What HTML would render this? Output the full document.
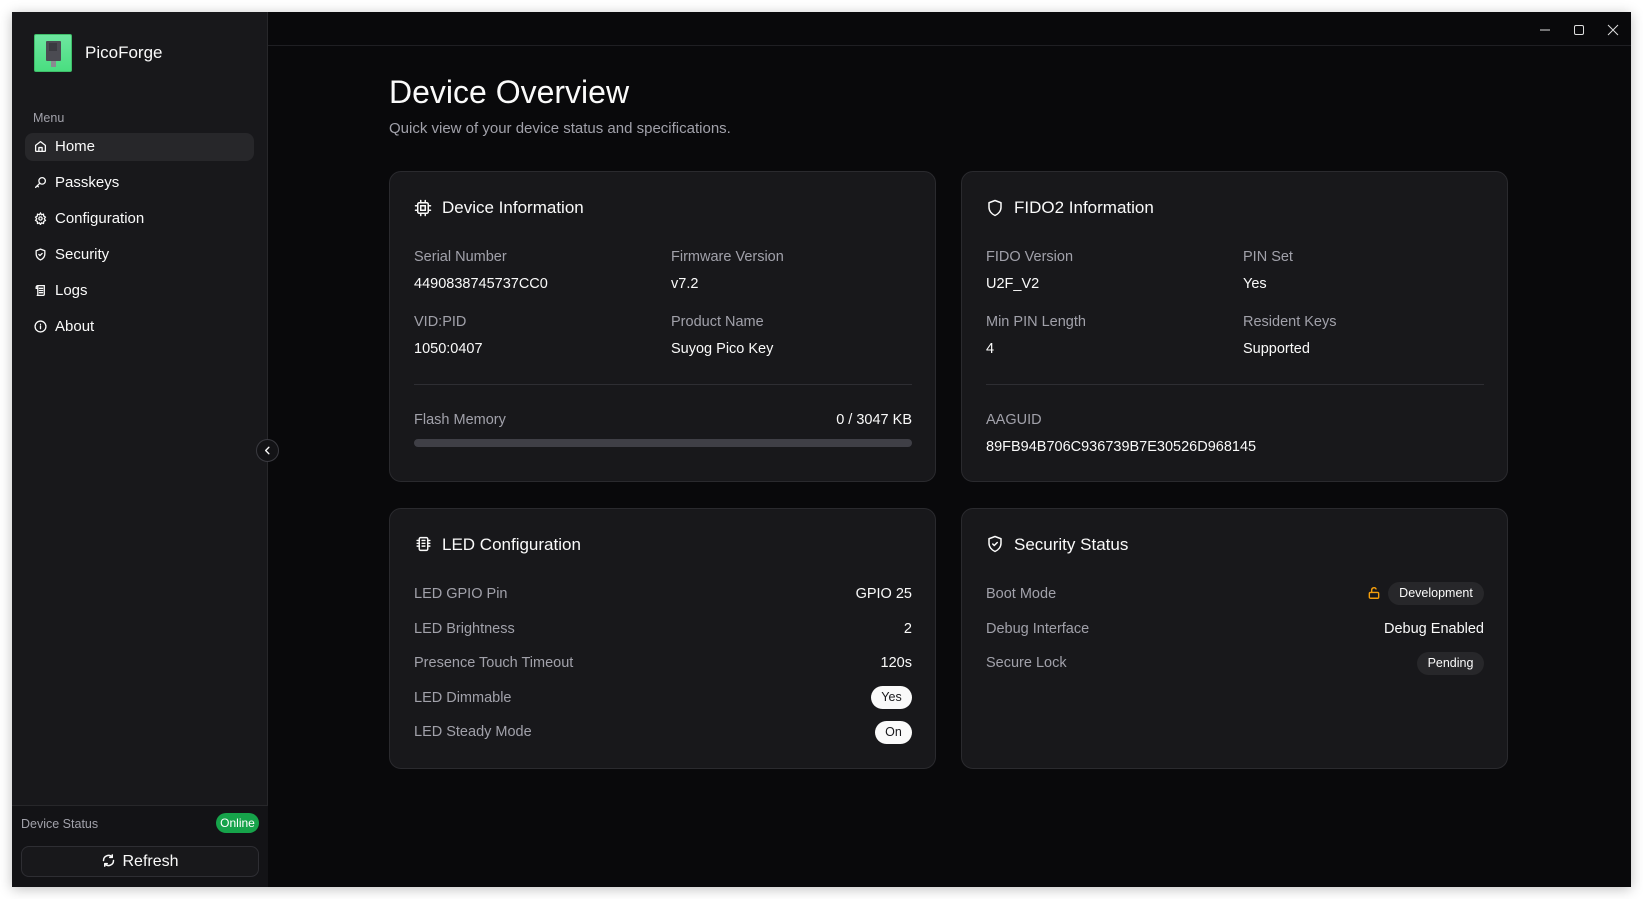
<!DOCTYPE html>
<html><head><meta charset="utf-8">
<style>
*{box-sizing:border-box;margin:0;padding:0}
body{width:1643px;height:899px;background:#fff;font-family:"Liberation Sans",sans-serif;position:relative;overflow:hidden;color:#fafafa}
.win{position:absolute;left:12px;top:12px;width:1619px;height:875px;background:#09090b;box-shadow:0 2px 12px rgba(0,0,0,.25);overflow:hidden}
.side{position:absolute;left:0;top:0;width:256px;height:875px;background:#18181b;border-right:1px solid #27272a}
.a{position:absolute;white-space:nowrap}
.lbl{color:#a1a1aa;font-size:14.5px;margin-top:2px}
.val{color:#fafafa;font-size:14.5px;margin-top:2px}
.card{position:absolute;background:#18181b;border:1px solid #2a2a2e;border-radius:12px}
.ct{font-size:17px;color:#fafafa;margin-top:1px}
.nav{position:absolute;left:13px;width:229px;height:28px;font-size:15px;color:#fafafa;line-height:28px;padding-left:30px}
.nav svg{position:absolute;left:9px;top:7px}
.badge{position:absolute;border-radius:12px;font-size:12.5px;text-align:center}
</style></head><body>
<div class="win">
  <div class="side">
    <div class="a" style="left:22px;top:22px;width:38px;height:38px;border-radius:2px;background:linear-gradient(#6ee7a0,#4ade80);border:1px solid #3fbf6a">
      <div style="position:absolute;left:11px;top:6px;width:15px;height:20px;background:#4b4b52;border-radius:1px"></div>
      <div style="position:absolute;left:14px;top:8px;width:8px;height:8px;background:#3a3a40"></div>
      <div style="position:absolute;left:16px;top:26px;width:5px;height:6px;background:#8a8a90"></div>
    </div>
    <div class="a" style="left:73px;top:31px;font-size:17px;color:#fafafa">PicoForge</div>
    <div class="a" style="left:21px;top:99px;font-size:12.5px;color:#a1a1aa">Menu</div>
    <div class="nav" style="top:121px;background:#27272a;border-radius:8px">
      <svg width="13" height="13" viewBox="0 0 24 24" fill="none" stroke="#fafafa" stroke-width="2.4" stroke-linecap="round" stroke-linejoin="round"><path d="M3 10l9-7 9 7v10a1 1 0 0 1-1 1H4a1 1 0 0 1-1-1z"/><path d="M9 21v-7h6v7"/></svg>Home</div>
    <div class="nav" style="top:157px">
      <svg width="13" height="13" viewBox="0 0 24 24" fill="none" stroke="#fafafa" stroke-width="2.4" stroke-linecap="round"><circle cx="15" cy="9" r="6"/><path d="M10.5 13.5L3 21M6 18l2 2"/></svg>Passkeys</div>
    <div class="nav" style="top:193px">
      <svg width="13" height="13" viewBox="0 0 24 24" fill="none" stroke="#fafafa" stroke-width="2.4"><circle cx="12" cy="12" r="3"/><path d="M12 2l2 3 3.5-1 .5 3.5 3 2-2 3 2 3-3 2-.5 3.5-3.5-1-2 3-2-3-3.5 1-.5-3.5-3-2 2-3-2-3 3-2 .5-3.5 3.5 1z"/></svg>Configuration</div>
    <div class="nav" style="top:229px">
      <svg width="13" height="13" viewBox="0 0 24 24" fill="none" stroke="#fafafa" stroke-width="2.4" stroke-linecap="round" stroke-linejoin="round"><path d="M12 2l8 3v6c0 5-3.5 9-8 11-4.5-2-8-6-8-11V5z"/><path d="M9 12l2 2 4-4"/></svg>Security</div>
    <div class="nav" style="top:265px">
      <svg width="13" height="13" viewBox="0 0 24 24" fill="none" stroke="#fafafa" stroke-width="2.4" stroke-linecap="round"><path d="M7 3h12v16a2 2 0 0 1-2 2H6M7 3a3 3 0 0 0-3 3v2h3M7 3v16M10 8h6M10 12h6M10 16h6"/></svg>Logs</div>
    <div class="nav" style="top:301px">
      <svg width="13" height="13" viewBox="0 0 24 24" fill="none" stroke="#fafafa" stroke-width="2.4" stroke-linecap="round"><circle cx="12" cy="12" r="10"/><path d="M12 16v-5M12 8h.01"/></svg>About</div>
    <div class="a" style="left:0;top:793px;width:256px;height:82px;background:#131316;border-top:1px solid #27272a"></div>
    <div class="a" style="left:9px;top:805px;font-size:12.5px;color:#a1a1aa">Device Status</div>
    <div class="badge" style="left:204px;top:801px;width:43px;height:20px;line-height:20px;background:#16a34a;color:#fff;font-size:12px">Online</div>
    <div class="a" style="left:9px;top:834px;width:238px;height:31px;border:1px solid #2e2e33;border-radius:8px;background:#18181b;text-align:center;line-height:30px;font-size:16px;color:#fafafa">
      <svg width="15" height="15" viewBox="0 0 24 24" fill="none" stroke="#fafafa" stroke-width="2.4" stroke-linecap="round" stroke-linejoin="round" style="vertical-align:-2px;margin-right:6px"><path d="M20 12a8 8 0 0 1-14 5.3M4 12a8 8 0 0 1 14-5.3"/><path d="M18 3v4h-4M6 21v-4h4"/></svg>Refresh</div>
  </div>
  <div class="a" style="left:256px;top:33px;width:1363px;height:1px;background:#1f1f23"></div>
  <div class="a" style="left:244px;top:427px;width:23px;height:23px;border-radius:50%;background:#131316;border:1px solid #3a3a40"></div>
  <svg class="a" style="left:250px;top:433px" width="11" height="11" viewBox="0 0 24 24" fill="none" stroke="#fafafa" stroke-width="3" stroke-linecap="round" stroke-linejoin="round"><path d="M15 5l-7 7 7 7"/></svg>
  <svg class="a" style="left:1527px;top:12px" width="12" height="12" viewBox="0 0 12 12"><path d="M1 6h10" stroke="#ddd" stroke-width="1"/></svg>
  <svg class="a" style="left:1561px;top:12px" width="12" height="12" viewBox="0 0 12 12"><rect x="1.5" y="1.5" width="9" height="9" rx="1.5" fill="none" stroke="#ddd" stroke-width="1"/></svg>
  <svg class="a" style="left:1595px;top:12px" width="12" height="12" viewBox="0 0 12 12"><path d="M1 1l10 10M11 1L1 11" stroke="#ddd" stroke-width="1"/></svg>

  <div class="a" style="left:377px;top:62px;font-size:32px;color:#fafafa">Device Overview</div>
  <div class="a" style="left:377px;top:108px;font-size:15px;color:#a1a1aa">Quick view of your device status and specifications.</div>

  <div class="card" style="left:377px;top:159px;width:547px;height:311px"></div>
  <svg class="a" style="left:402px;top:187px" width="18" height="18" viewBox="0 0 24 24" fill="none" stroke="#fafafa" stroke-width="2" stroke-linecap="round"><rect x="5" y="5" width="14" height="14" rx="2"/><rect x="9" y="9" width="6" height="6"/><path d="M9 2v3M15 2v3M9 19v3M15 19v3M2 9h3M2 15h3M19 9h3M19 15h3"/></svg>
  <div class="a ct" style="left:430px;top:185px">Device Information</div>
  <div class="a lbl" style="left:402px;top:235px">Serial Number</div>
  <div class="a val" style="left:402px;top:262px">4490838745737CC0</div>
  <div class="a lbl" style="left:659px;top:235px">Firmware Version</div>
  <div class="a val" style="left:659px;top:262px">v7.2</div>
  <div class="a lbl" style="left:402px;top:300px">VID:PID</div>
  <div class="a val" style="left:402px;top:327px">1050:0407</div>
  <div class="a lbl" style="left:659px;top:300px">Product Name</div>
  <div class="a val" style="left:659px;top:327px">Suyog Pico Key</div>
  <div class="a" style="left:402px;top:372px;width:498px;height:1px;background:#2e2e33"></div>
  <div class="a lbl" style="left:402px;top:398px">Flash Memory</div>
  <div class="a val" style="left:700px;top:398px;width:200px;text-align:right">0 / 3047 KB</div>
  <div class="a" style="left:402px;top:427px;width:498px;height:8px;border-radius:4px;background:#3f3f46"></div>

  <div class="card" style="left:949px;top:159px;width:547px;height:311px"></div>
  <svg class="a" style="left:974px;top:187px" width="18" height="18" viewBox="0 0 24 24" fill="none" stroke="#fafafa" stroke-width="2" stroke-linejoin="round"><path d="M12 2l8 3v6c0 5-3.5 9-8 11-4.5-2-8-6-8-11V5z"/></svg>
  <div class="a ct" style="left:1002px;top:185px">FIDO2 Information</div>
  <div class="a lbl" style="left:974px;top:235px">FIDO Version</div>
  <div class="a val" style="left:974px;top:262px">U2F_V2</div>
  <div class="a lbl" style="left:1231px;top:235px">PIN Set</div>
  <div class="a val" style="left:1231px;top:262px">Yes</div>
  <div class="a lbl" style="left:974px;top:300px">Min PIN Length</div>
  <div class="a val" style="left:974px;top:327px">4</div>
  <div class="a lbl" style="left:1231px;top:300px">Resident Keys</div>
  <div class="a val" style="left:1231px;top:327px">Supported</div>
  <div class="a" style="left:974px;top:372px;width:498px;height:1px;background:#2e2e33"></div>
  <div class="a lbl" style="left:974px;top:398px">AAGUID</div>
  <div class="a val" style="left:974px;top:425px">89FB94B706C936739B7E30526D968145</div>

  <div class="card" style="left:377px;top:496px;width:547px;height:261px"></div>
  <svg class="a" style="left:403px;top:523px" width="17" height="18" viewBox="0 0 24 24" fill="none" stroke="#fafafa" stroke-width="2" stroke-linecap="round"><rect x="6" y="3" width="12" height="18" rx="2"/><path d="M10 7h4M10 11h4M10 15h4M3 7h3M3 11h3M3 15h3M18 7h3M18 11h3M18 15h3"/></svg>
  <div class="a ct" style="left:430px;top:522px">LED Configuration</div>
  <div class="a lbl" style="left:402px;top:572px">LED GPIO Pin</div>
  <div class="a val" style="left:700px;top:572px;width:200px;text-align:right">GPIO 25</div>
  <div class="a lbl" style="left:402px;top:607px">LED Brightness</div>
  <div class="a val" style="left:700px;top:607px;width:200px;text-align:right">2</div>
  <div class="a lbl" style="left:402px;top:641px">Presence Touch Timeout</div>
  <div class="a val" style="left:700px;top:641px;width:200px;text-align:right">120s</div>
  <div class="a lbl" style="left:402px;top:676px">LED Dimmable</div>
  <div class="badge" style="left:859px;top:674px;width:41px;height:23px;line-height:23px;background:#fafafa;color:#18181b">Yes</div>
  <div class="a lbl" style="left:402px;top:710px">LED Steady Mode</div>
  <div class="badge" style="left:863px;top:709px;width:37px;height:23px;line-height:23px;background:#fafafa;color:#18181b">On</div>

  <div class="card" style="left:949px;top:496px;width:547px;height:261px"></div>
  <svg class="a" style="left:974px;top:523px" width="18" height="18" viewBox="0 0 24 24" fill="none" stroke="#fafafa" stroke-width="2" stroke-linecap="round" stroke-linejoin="round"><path d="M12 2l8 3v6c0 5-3.5 9-8 11-4.5-2-8-6-8-11V5z"/><path d="M9 12l2 2 4-4"/></svg>
  <div class="a ct" style="left:1002px;top:522px">Security Status</div>
  <div class="a lbl" style="left:974px;top:572px">Boot Mode</div>
  <svg class="a" style="left:1355px;top:574px" width="14" height="14" viewBox="0 0 24 24" fill="none" stroke="#f59e0b" stroke-width="2.4" stroke-linecap="round"><rect x="4" y="11" width="16" height="10" rx="2"/><path d="M8 11V7a4 4 0 0 1 7.5-2"/></svg>
  <div class="badge" style="left:1376px;top:570px;width:96px;height:23px;line-height:23px;background:#27272a;color:#fafafa">Development</div>
  <div class="a lbl" style="left:974px;top:607px">Debug Interface</div>
  <div class="a val" style="left:1272px;top:607px;width:200px;text-align:right">Debug Enabled</div>
  <div class="a lbl" style="left:974px;top:641px">Secure Lock</div>
  <div class="badge" style="left:1405px;top:640px;width:67px;height:23px;line-height:23px;background:#27272a;color:#fafafa">Pending</div>
</div>
</body></html>
